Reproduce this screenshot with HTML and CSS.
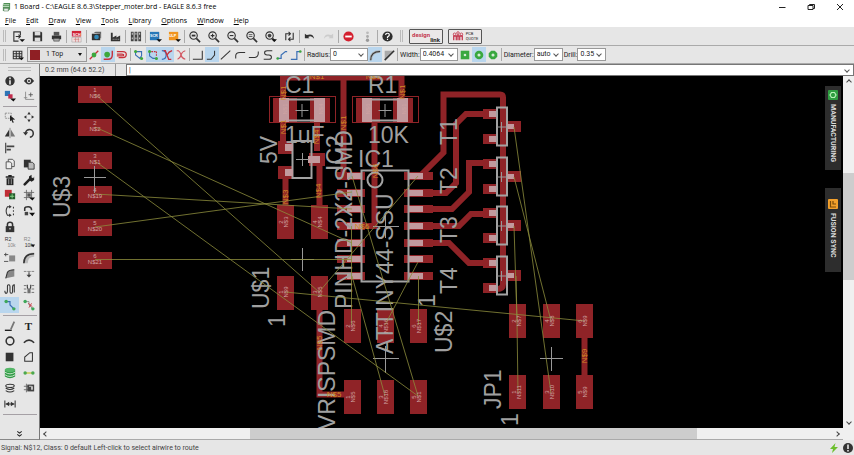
FILE: index.html
```html
<!DOCTYPE html>
<html lang="en">
<head>
<meta charset="utf-8">
<title>1 Board - EAGLE</title>
<link rel="stylesheet" href="styles.css">
</head>
<body>
<header class="titlebar">
  <svg class="app-icon" viewBox="0 0 10 11"><path d="M2 1h7v7l-2 2H1V3z" fill="#4f8f55"/><path d="M1 5h7M1 3h7" stroke="#c9e3c9" stroke-width="1"/><path d="M2 7h5v3H2z" fill="#e6efe6" stroke="#5c7f60" stroke-width=".6"/></svg>
  <h1>1 Board - C:\EAGLE 8.6.3\Stepper_moter.brd - EAGLE 8.6.3 free</h1>
  <div class="window-buttons">
    <button aria-label="Minimize"><svg viewBox="0 0 8 8"><path d="M1 4.5h6.500" /></svg></button>
    <button aria-label="Restore"><svg viewBox="0 0 8 8"><path d="M1 2.500h5v4H1zM2.500 2.500v-1H7.500v4H6"/></svg></button>
    <button aria-label="Close"><svg viewBox="0 0 8 8"><path d="M1 1l6 6M7 1L1 7"/></svg></button>
  </div>
</header>

<nav class="menubar">
  <a href="#"><u>F</u>ile</a><a href="#"><u>E</u>dit</a><a href="#"><u>D</u>raw</a><a href="#"><u>V</u>iew</a><a href="#"><u>T</u>ools</a><a href="#"><u>L</u>ibrary</a><a href="#"><u>O</u>ptions</a><a href="#"><u>W</u>indow</a><a href="#"><u>H</u>elp</a>
</nav>

<div class="toolbar main-tools">
  <span class="grip"></span>
  <button aria-label="Open"><svg viewBox="0 0 14 14"><path d="M9 6V2H2v10h5" class="ln"/><path d="M4 7h5M7 5l2 2-2 2" class="ln"/><path d="M8 10h6l-3 3z" fill="#111"/></svg></button>
  <button aria-label="Save"><svg viewBox="0 0 14 14"><path d="M2 2h9l1 1v9H2z" fill="#333"/><path d="M4 2h6v4H4zM4 8h6v4H4z" fill="#ddd"/><path d="M3 7h8" stroke="#333" stroke-width="1.500"/></svg></button>
  <button aria-label="Print"><svg viewBox="0 0 14 14"><path d="M4 2h6v4H4z" fill="#555"/><path d="M2 6h10v4H2z" fill="#333"/><path d="M4 9h6v3H4z" fill="#aaa" stroke="#333" stroke-width=".6"/></svg></button>
  <span class="sep"></span>
  <button aria-label="Schematic"><svg viewBox="0 0 14 14"><path d="M2 1h10v6H2z" fill="#d02236"/><text x="3" y="6" class="badge">SCH</text><path d="M2 8h10v5H2z" fill="#f2dede" stroke="#999" stroke-width=".5"/><path d="M4 10h6M6 8v5M9 8v5" stroke="#c77" stroke-width=".7"/></svg></button>
  <span class="sep"></span>
  <button aria-label="Board view"><svg viewBox="0 0 14 14"><path d="M2 4h9v7H2z" fill="#333"/><path d="M4 3l2-1h6v7h-1V4z" fill="#666"/><circle cx="7" cy="7.500" r="2.500" fill="#3289b8"/></svg></button>
  <button aria-label="Manufacture"><svg viewBox="0 0 14 14"><path d="M2 12V3h2v5l4-2v2l4-2v6z" fill="#333"/><path d="M4 10h7" stroke="#bbb" stroke-dasharray="1 1"/></svg></button>
  <span class="sep"></span>
  <button aria-label="Libraries"><svg viewBox="0 0 14 14"><path d="M2 2h3v10H2zM6 2h3v10H6zM10 2h3v10h-3z" fill="#444"/><path d="M3 4h1M7 4h1M11 4h1M3 9h1M7 9h1M11 9h1" stroke="#ddd" stroke-width="2"/></svg></button>
  <span class="sep"></span>
  <button aria-label="Run script"><svg viewBox="0 0 14 14"><path d="M1 2h10v9H1z" fill="#2878b8"/><text x="1" y="8" class="badge">SCR</text><path d="M8 10h6l-3 3z" fill="#111"/></svg></button>
  <button aria-label="Run ULP"><svg viewBox="0 0 14 14"><path d="M1 2h10v9H1z" fill="#f0931f"/><text x="1" y="8" class="badge">ULP</text><path d="M8 10h6l-3 3z" fill="#111"/></svg></button>
  <span class="sep"></span>
  <button aria-label="Zoom to fit"><svg viewBox="0 0 14 14"><circle cx="6" cy="6" r="4" class="ln"/><path d="M9 9l4 4" class="th"/><path d="M4 5h4v2H4z" fill="#333"/></svg></button>
  <button aria-label="Zoom in"><svg viewBox="0 0 14 14"><circle cx="6" cy="6" r="4" class="ln"/><path d="M9 9l4 4" class="th"/><path d="M4 6h4M6 4v4" class="ln"/></svg></button>
  <button aria-label="Zoom out"><svg viewBox="0 0 14 14"><circle cx="6" cy="6" r="4" class="ln"/><path d="M9 9l4 4" class="th"/><path d="M4 6h4" class="ln"/></svg></button>
  <button aria-label="Redraw"><svg viewBox="0 0 14 14"><circle cx="6" cy="6" r="4" class="ln"/><path d="M9 9l4 4" class="th"/><path d="M4 5h4M4 7h4" stroke="#333" stroke-width=".8"/></svg></button>
  <button aria-label="Zoom select"><svg viewBox="0 0 14 14"><circle cx="6" cy="6" r="4" class="ln"/><circle cx="6" cy="6" r="2" fill="#444"/><path d="M9 9l3 3" class="th"/><path d="M8 10h6l-3 3z" fill="#111"/></svg></button>
  <button aria-label="Refresh"><svg viewBox="0 0 14 14"><path d="M3 11V4h5M6 2l2 2-2 2M11 3v7H6M8 8l-2 2 2 2" class="ln"/></svg></button>
  <span class="sep"></span>
  <button aria-label="Undo"><svg viewBox="0 0 14 14"><path d="M2 4v5h5L5.500 7.500Q9 5 12 9.500 11 3 4 5.500z" fill="#333"/></svg></button>
  <button aria-label="Redo"><svg viewBox="0 0 14 14"><path d="M12 4v5H7l1.500-1.500Q5 5 2 9.500 3 3 10 5.500z" fill="#ccc"/></svg></button>
  <span class="sep"></span>
  <button aria-label="Stop"><svg viewBox="0 0 14 14"><circle cx="7" cy="7" r="5.500" fill="#d4202f"/><path d="M3.500 7h7" stroke="#fff" stroke-width="2"/></svg></button>
  <button aria-label="Go"><svg viewBox="0 0 14 14"><circle cx="7" cy="3" r="1.500" fill="#bbb"/><circle cx="7" cy="7" r="1.500" fill="#aaa"/><circle cx="7" cy="11" r="1.800" fill="#999"/></svg></button>
  <span class="sep"></span>
  <button aria-label="Help"><svg viewBox="0 0 14 14"><circle cx="7" cy="7" r="5.500" fill="#2f2f2f"/><path d="M5 5.500Q5 3.500 7 3.500T9 5.500Q9 6.500 7 7.500v1M7 9.500v1.200" fill="none" stroke="#fff" stroke-width="1.300"/></svg></button>
  <span class="grip"></span>
  <button class="brand" aria-label="design link"><span class="brand-a">design</span><span class="brand-b">link</span></button>
  <button class="brand quote" aria-label="PCB quote"><svg viewBox="0 0 14 12"><path d="M2 11V6h10v5M5 11V5M9 11V5M7 11V4" stroke="#c43a50" stroke-width="1.500" fill="none"/><circle cx="3" cy="4" r="1.500" fill="none" stroke="#c43a50"/><circle cx="7" cy="2.500" r="1.500" fill="none" stroke="#c43a50"/><circle cx="11" cy="4" r="1.500" fill="none" stroke="#c43a50"/></svg><span class="brand-c">PCB<br>QUOTE</span></button>
</div>

<div class="toolbar params">
  <span class="grip"></span>
  <button class="wide" aria-label="Grid"><svg viewBox="0 0 14 14"><path d="M1.500 2.500h10v9h-10zM1.500 5.500h10M1.500 8.500h10M5 2.500v9M8.500 2.500v9" class="ln"/><path d="M8 10h6l-3 3z" fill="#111"/></svg></button>
  <span class="combo layer"><i class="swatch"></i><select aria-label="Layer"><option>1 Top</option></select></span>
  <button aria-label="Ignore obstacles"><svg viewBox="0 0 14 14"><path d="M2 12L12 2" stroke="#c8303a" stroke-width="1.600"/><circle cx="7" cy="7" r="2.800" fill="#3da83d"/></svg></button>
  <button class="on" aria-label="Walkaround"><svg viewBox="0 0 14 14"><path d="M2 12h5q5 0 5-5V2" fill="none" stroke="#c8303a" stroke-width="1.600"/><circle cx="6" cy="6.500" r="3.300" fill="#3da83d"/></svg></button>
  <button aria-label="Push"><svg viewBox="0 0 14 14"><path d="M1 3h7q4 0 4 3.500T8 10H3M1 6h6q2 0 2 1T7 8H1" fill="none" stroke="#c8303a" stroke-width="1.500"/></svg></button>
  <span class="sep"></span>
  <button aria-label="Loop removal"><svg viewBox="0 0 14 14"><path d="M3 3h7v5l-2 3-5-4z" fill="none" stroke="#3b70b5" stroke-width="1.300"/><circle cx="3" cy="3" r="1.800" fill="#3da83d"/><circle cx="10" cy="11" r="1.800" fill="#3da83d"/></svg></button>
  <button class="on" aria-label="Loop keep"><svg viewBox="0 0 14 14"><path d="M3 3v5l4 3h3" fill="none" stroke="#3b70b5" stroke-width="1.300"/><path d="M5 3h6v6" fill="none" stroke="#c8303a" stroke-dasharray="2 1" stroke-width="1.300"/><circle cx="3" cy="3" r="1.800" fill="#3da83d"/><circle cx="11" cy="11" r="1.800" fill="#3da83d"/></svg></button>
  <button class="on" aria-label="Corner mode"><svg viewBox="0 0 14 14"><path d="M1 2q5 0 5 5t-5 5" class="blue"/><path d="M3 2h2l4 10h3M13 2q-4 1-6 5" fill="none" stroke="#c8303a" stroke-width="1.500"/></svg></button>
  <button aria-label="Corner free"><svg viewBox="0 0 14 14"><path d="M2 2h2q2 1 3 5t5 5M12 2q-4 1-5 5T3 12" fill="none" stroke="#d25560" stroke-width="1.300"/></svg></button>
  <span class="sep"></span>
  <button aria-label="Bend 90"><svg viewBox="0 0 14 14"><path d="M1 12h11V2" class="ln"/></svg></button>
  <button class="on" aria-label="Bend 45"><svg viewBox="0 0 14 14"><path d="M1 12h5l4-5V2" class="ln"/></svg></button>
  <button aria-label="Straight"><svg viewBox="0 0 14 14"><path d="M1 12L12 2" class="ln"/></svg></button>
  <button aria-label="Arc start"><svg viewBox="0 0 14 14"><path d="M2 11V8q0-4 5-4h6" class="ln"/></svg></button>
  <button aria-label="Arc end"><svg viewBox="0 0 14 14"><path d="M1 10h6q5 0 5-5V3" class="ln"/></svg></button>
  <button aria-label="S bend"><svg viewBox="0 0 14 14"><path d="M12 2H6Q3 2 3 4.500T6 7h2q3 0 3 2.500T8 12H2" class="ln"/></svg></button>
  <button aria-label="Bend A"><svg viewBox="0 0 14 14"><path d="M1 11h5V7l5-4h2" class="blue"/><circle cx="2" cy="11" r="1.500" fill="#3da83d"/></svg></button>
  <button aria-label="Bend B"><svg viewBox="0 0 14 14"><path d="M1 12h7V3h5" class="blue"/><circle cx="12" cy="3" r="1.500" fill="#3da83d"/></svg></button>
  <span class="sep"></span>
  <label for="radius">Radius:</label><span class="combo c-wide"><select id="radius"><option>0</option></select></span>
  <button class="on" aria-label="Round miter"><svg viewBox="0 0 14 14"><path d="M2 13Q2 3 13 3" fill="none" stroke="#aaa" stroke-width="3"/><path d="M2 13Q2 3 13 3" class="ln"/></svg></button>
  <button aria-label="Straight miter"><svg viewBox="0 0 14 14"><path d="M2 2h11L2 13z" fill="#aaa"/><path d="M2 13L13 2" class="th"/></svg></button>
  <span class="sep"></span>
  <label for="width">Width:</label><span class="combo c-wide"><select id="width"><option>0.4064</option></select></span>
  <button aria-label="Square via"><svg viewBox="0 0 14 14"><path d="M2 2h10v10H2z" fill="#3aa83f"/><circle cx="7" cy="7" r="1.500" fill="#d6edd6"/></svg></button>
  <button class="on" aria-label="Round via"><svg viewBox="0 0 14 14"><circle cx="7" cy="7" r="5" fill="#3aa83f"/><circle cx="7" cy="7" r="1.800" fill="#d6edd6"/></svg></button>
  <button aria-label="Octagon via"><svg viewBox="0 0 14 14"><path d="M5 2h4l3 3v4l-3 3H5L2 9V5z" fill="#3aa83f"/><circle cx="7" cy="7" r="1.800" fill="#d6edd6"/></svg></button>
  <span class="sep"></span>
  <label for="diameter">Diameter:</label><span class="combo"><select id="diameter"><option>auto</option></select></span>
  <label for="drill">Drill:</label><span class="combo"><select id="drill"><option>0.35</option></select></span>
</div>

<main class="workspace">
  <aside class="palette">
    <span class="palette-grip"></span>
    <div class="tools tools-view">
      <button aria-label="Info"><svg viewBox="0 0 14 14"><circle cx="7" cy="7" r="5.500" fill="#333"/><path d="M7 3v2M7 6v5" stroke="#eee" stroke-width="1.800"/></svg></button>
      <button aria-label="Show"><svg viewBox="0 0 14 14"><path d="M1 7q6-8 12 0-6 8-12 0z" fill="#333"/><circle cx="7" cy="7" r="2.500" fill="#ddd"/><circle cx="7" cy="7" r="1.300" fill="#333"/></svg></button>
      <button aria-label="Layers"><svg viewBox="0 0 14 14"><path d="M1 1h6v6H1z" fill="#2e75b6"/><path d="M5 5h5v5H5z" fill="#c22b4b"/><path d="M7 10h7l-3 3.500z" fill="#111"/></svg></button>
      <button aria-label="Mark"><svg viewBox="0 0 14 14"><path d="M3 2v9h10M1 9h4" fill="none" stroke="#888"/><path d="M9 3v5M6.500 5.500h5" stroke="#555"/></svg></button>
    </div>
    <hr>
    <div class="tools tools-edit">
      <button aria-label="Group"><svg viewBox="0 0 14 14"><path d="M1.500 2.500h7v6h-7z" fill="none" stroke="#888" stroke-dasharray="2 1"/><path d="M7 5l6 5-3 .3 1.500 3-1.500.5-1.300-3L7 12z" fill="#222"/></svg></button>
      <button aria-label="Move"><svg viewBox="0 0 14 14"><path d="M7 1l2 3H5zM7 13l2-3H5zM1 7l3-2v4zM13 7l-3-2v4z" fill="#333"/></svg></button>
      <button aria-label="Mirror"><svg viewBox="0 0 14 14"><path d="M6 3v8H1z" fill="#333"/><path d="M8 3v8h5z" fill="#777"/><path d="M7 1v12" stroke="#555" stroke-width=".7"/></svg></button>
      <button aria-label="Rotate"><svg viewBox="0 0 14 14"><path d="M3 8A4.500 4.500 0 1 1 8 12" class="th" fill="none"/><path d="M0 6h6L3 10z" fill="#333"/></svg></button>
      <button aria-label="Align"><svg viewBox="0 0 14 14"><path d="M2 1v12" class="ln"/><path d="M3 5h9M3 9h5" stroke="#444" stroke-width="2"/></svg></button><span></span>
      <button aria-label="Copy"><svg viewBox="0 0 14 14"><path d="M5 1.500h5l2 2V10H5z" fill="#eee" stroke="#444"/><path d="M2.500 4.500H7L9 6v6.500H2.500z" fill="#eee" stroke="#444"/></svg></button>
      <button aria-label="Paste"><svg viewBox="0 0 14 14"><path d="M1 2h8v9H1z" fill="#333"/><path d="M6 5h5l2 2v6H6z" fill="#bbb" stroke="#333"/></svg></button>
      <button aria-label="Delete"><svg viewBox="0 0 14 14"><path d="M2 3.500h10M5 2h4" stroke="#222" stroke-width="1.500"/><path d="M3 5h8v8H3z" fill="#222"/><path d="M5.500 6v6M8.500 6v6" stroke="#aaa"/></svg></button>
      <button aria-label="Change"><svg viewBox="0 0 14 14"><path d="M2 12l6-6" stroke="#222" stroke-width="3" stroke-linecap="round"/><path d="M7 7V3l3-2v3l2 1 1-2v4l-3 2z" fill="#222"/></svg></button>
      <button aria-label="Add part"><svg viewBox="0 0 14 14"><path d="M1 1h8v8H1z" fill="#c02d35"/><path d="M6 5h7v7H6z" fill="#235c2b"/><path d="M9.500 6v5M7 8.500h5" stroke="#8edc8e"/></svg></button>
      <button aria-label="Replace"><svg viewBox="0 0 14 14"><path d="M1 4h12M1 10h9M4 1v12M10 1v9" stroke="#666"/><path d="M5 5h4v4H5z" fill="#555"/><path d="M7 10h7l-3 3.500z" fill="#111"/></svg></button>
      <button aria-label="Pin swap"><svg viewBox="0 0 14 14"><path d="M7 2H4Q1 7 4 12h3" class="ln"/><path d="M6 0l3 2-3 2zM6 10l3 2-3 2z" fill="#333"/><path d="M11 2v11" class="ln" stroke-dasharray="2 2"/></svg></button>
      <button aria-label="Replace part"><svg viewBox="0 0 14 14"><path d="M2 7V4q0-2 4-2t4 4" class="th" fill="none"/><path d="M2 8h4v4H2z" fill="#444"/><path d="M7 9h7l-3 4z" fill="#111"/></svg></button>
      <button aria-label="Lock"><svg viewBox="0 0 14 14"><path d="M4 7V4q0-2.500 3-2.500T10 4v3" class="th" fill="none"/><path d="M2 6h10v7H2z" fill="#333"/><circle cx="7" cy="9" r="1" fill="#bbb"/></svg></button><span></span>
      <button aria-label="Name"><svg viewBox="0 0 14 14"><text x="1" y="6" class="glyph">R2</text><text x="4" y="13" class="glyph light">10k</text></svg></button>
      <button aria-label="Value"><svg viewBox="0 0 14 14"><text x="1" y="6" class="glyph light">R2</text><text x="2" y="13" class="glyph">10k</text><path d="M9 10h5l-2 3z" fill="#111"/></svg></button>
      <button aria-label="Smash"><svg viewBox="0 0 14 14"><path d="M6 4h7v7H6z" fill="#888"/><path d="M0 3h5M0 11h5M2 1v4" stroke="#444"/></svg></button>
      <button aria-label="Miter"><svg viewBox="0 0 14 14"><path d="M3 13Q3 3 13 3" fill="none" stroke="#bbb" stroke-width="5"/><path d="M1 13Q1 2 13 2" class="th" fill="none"/></svg></button>
      <button aria-label="Split"><svg viewBox="0 0 14 14"><path d="M4 5Q5 2 12 2v8L2 12z" fill="#888"/><path d="M2 12l2-7q2-3 8-3" class="ln"/></svg></button>
      <button aria-label="Optimize"><svg viewBox="0 0 14 14"><path d="M1 4h3M10 4h3M5 4h4" stroke="#777"/><path d="M4 8h6l-3 3z" fill="#444"/><path d="M7 5v4" class="ln"/></svg></button>
      <button aria-label="Meander"><svg viewBox="0 0 14 14"><path d="M1 9q0 3 1.500 3T4 9V4q0-2 1.500-2T7 4v6q0 2 1.500 2T10 10V5q0-3 2-3v9" class="ln"/></svg></button>
      <button aria-label="Differential"><svg viewBox="0 0 14 14"><path d="M1 3h3M1 7h3M1 11h3M10 3h3M10 7h3M10 11h3" stroke="#666"/><path d="M5 2v3l1 2v5M9 2v3L8 7v5" class="ln"/></svg></button>
      <button class="on" aria-label="Route"><svg viewBox="0 0 14 14"><path d="M2 3h5v4l5 5" class="blue"/><circle cx="2.500" cy="3" r="2" fill="#3da85a"/><circle cx="11.500" cy="11.500" r="2" fill="#3da85a"/></svg></button>
      <button aria-label="Ripup"><svg viewBox="0 0 14 14"><path d="M2 3h5v4l5 5" fill="none" stroke="#888"/><path d="M6 5l5 4M10 5l-3 5" stroke="#c8303a"/><circle cx="2.500" cy="3" r="2" fill="#3da85a"/><circle cx="11.500" cy="11.500" r="2" fill="#3da85a"/></svg></button>
    </div>
    <hr>
    <div class="tools tools-draw">
      <button aria-label="Line"><svg viewBox="0 0 14 14"><path d="M1 12h8" stroke="#111" stroke-width="1.500"/><path d="M8 11l4-9" stroke="#777" stroke-width="2"/></svg></button>
      <button class="letter" aria-label="Text">T</button>
      <button aria-label="Circle"><svg viewBox="0 0 14 14"><circle cx="7" cy="7" r="4.500" class="th" fill="none"/></svg></button>
      <button aria-label="Arc"><svg viewBox="0 0 14 14"><path d="M1 9q6-6 12 0" class="th" fill="none"/></svg></button>
      <button aria-label="Rectangle"><svg viewBox="0 0 14 14"><path d="M2 2h9v10H2z" fill="#333"/></svg></button>
      <button aria-label="Polygon"><svg viewBox="0 0 14 14"><path d="M2 12V7l6-5h3v10z" class="ln"/></svg></button>
      <button aria-label="Via"><svg viewBox="0 0 14 14"><path d="M1 3v8q6 4 12 0V3z" fill="#319a45"/><ellipse cx="7" cy="3.500" rx="6" ry="2.500" fill="#55b768"/><path d="M1 6q6 4 12 0M1 9q6 4 12 0" fill="none" stroke="#d9efdc"/></svg></button>
      <button aria-label="Signal"><svg viewBox="0 0 14 14"><path d="M2 7h10" stroke="#c5c939" stroke-width="1.500"/><circle cx="2.500" cy="7" r="2" fill="#4ba84f"/><circle cx="11.500" cy="7" r="2" fill="#4ba84f"/></svg></button>
      <button aria-label="Hole"><svg viewBox="0 0 14 14"><ellipse cx="7" cy="4.500" rx="5" ry="2" class="ln"/><path d="M2 7q5 3.500 10 0M2 10q5 3.500 10 0" class="ln"/></svg></button>
      <button aria-label="Attribute"><svg viewBox="0 0 14 14"><path d="M1 5h5M1 9h5M4 2v10" stroke="#666"/><path d="M5 3h8v8H5z" fill="#444"/><path d="M7 5h3v4M11 5v4" stroke="#ddd" fill="none"/></svg></button>
      <button aria-label="Dimension"><svg viewBox="0 0 14 14"><path d="M1 3v8M13 3v8M2 7h10" class="ln"/><path d="M2 7l4-2.500v5zM12 7L8 4.500v5z" fill="#333"/></svg></button>
    </div>
    <hr>
    <button class="more" aria-label="More tools"><svg viewBox="0 0 8 8"><path d="M1.500 1L4 3l2.500-2M1.500 4.500l2.500 2 2.500-2" fill="none" stroke="#222" stroke-width="1.200"/></svg></button>
  </aside>

  <section class="editor">
    <div class="command-row">
      <output class="coords">0.2 mm (64.6 52.2)</output>
      <span class="combo command"><input type="text" aria-label="Command line" value="|"></span>
    </div>
    <div class="view">
      <div class="canvas">
        <svg class="board" viewBox="40 76 803 352" preserveAspectRatio="xMinYMin slice">
          <defs>
            <g id="chip">
              <rect x="269.500" y="96.500" width="66" height="26" class="outline"/>
              <path d="M273 98h24v25h-24zM310 98h20v25h-20z" class="cu"/>
              <path d="M279 98h10v24h-10zM314 98h11v24h-11z" class="pin"/>
              <path d="M289 99.500h25M289 120.500h25" class="silk"/>
              <path d="M302 104v13M295.500 110.500h13" class="origin"/>
            </g>
            <g id="sot">
              <path d="M483 109h14v10h-14zM483 134h14v10h-14zM508 121h13v11h-13z" class="cu"/>
              <rect x="497" y="107.500" width="10" height="38" class="silk"/>
              <path d="M489 111h7v6h-7zM489 136h7v6h-7zM507 124h7v5h-7z" class="pin"/>
              <path d="M501.500 122v10M497 127h10" class="origin"/>
            </g>
            <g id="lpin"><path d="M337 172h28v8h-28z" class="cu"/><path d="M347 173h14v6h-14z" class="pin"/></g>
            <g id="rpin"><path d="M404 172h29v8h-29z" class="cu"/><path d="M408 173h15v6h-15z" class="pin"/></g>
            <path id="hpad" d="M78 86h34v17H78z" class="cu"/>
            <path id="vpad" d="M0 0h17v34H0z" class="cu"/>
          </defs>
          <rect x="40" y="76" width="803" height="352" fill="#000"/>

          <g class="trace">
            <path d="M283 76v68M317 120v31M283 77.500h121M401.500 76v24M343.500 77v99h8M374.500 120v106h-14"/>
            <path d="M285.500 172v34M319.500 160v46M319.500 300v94.500h26M584.500 336v42"/>
            <path d="M418 178l25.500-25.500V94.500H500q3 0 3 3V284q0 5-6 5"/>
            <path d="M428 193h18l10-10v-59l10-10h20"/>
            <path d="M428 209h24l17-17v-29h17"/>
            <path d="M428 226h31l12-12h15"/>
            <path d="M428 243h21l20 20h17"/>
          </g>
          <path d="M278 141h15v13h-15zM278 166h15v13h-15zM309 153h16v13h-16z" class="cu"/>
          <use href="#chip"/><use href="#chip" x="83"/>
          <use href="#lpin"/><use href="#lpin" y="17"/><use href="#lpin" y="33"/><use href="#lpin" y="50"/><use href="#lpin" y="67"/><use href="#lpin" y="83"/><use href="#lpin" y="100"/>
          <use href="#rpin"/><use href="#rpin" y="17"/><use href="#rpin" y="33"/><use href="#rpin" y="50"/><use href="#rpin" y="67"/><use href="#rpin" y="83"/><use href="#rpin" y="100"/>
          <use href="#sot"/><use href="#sot" y="50"/><use href="#sot" y="99"/><use href="#sot" y="149"/>
          <use href="#hpad"/><use href="#hpad" y="33"/><use href="#hpad" y="66"/><use href="#hpad" y="100"/><use href="#hpad" y="133"/><use href="#hpad" y="166"/>
          <use href="#vpad" x="277" y="205"/><use href="#vpad" x="311" y="205"/><use href="#vpad" x="277" y="276"/><use href="#vpad" x="311" y="276"/>
          <use href="#vpad" x="344" y="309"/><use href="#vpad" x="377" y="309"/><use href="#vpad" x="410" y="309"/>
          <use href="#vpad" x="344" y="380"/><use href="#vpad" x="377" y="380"/><use href="#vpad" x="410" y="380"/>
          <use href="#vpad" x="509" y="304"/><use href="#vpad" x="543" y="304"/><use href="#vpad" x="576" y="304"/>
          <use href="#vpad" x="509" y="375"/><use href="#vpad" x="543" y="375"/><use href="#vpad" x="576" y="375"/>

          <rect x="292.500" y="141" width="19" height="37" class="silk"/>
          <path d="M285 144h8v7h-8zM285 169h8v7h-8zM308 156h12v7h-12z" class="pin"/>
          <path d="M302.500 153v13M296 159.500h13" class="origin"/>
          <rect x="361.500" y="170.500" width="47" height="111" class="silk"/>
          <circle cx="375" cy="180" r="7.500" class="silk"/>
          <path d="M94.500 166v27M84 177.500h22M302.500 248v23M291 259.500h23M385.500 215v23M373 226.500h26M385.500 346v27M373 358.500h26M551.500 347v24M540 358.500h23" class="origin"/>

          <g class="name">
            <text x="285" y="93">C1</text><text x="368" y="93">R1</text>
            <text x="285" y="143">1uF</text><text x="368" y="143">10K</text><text x="358" y="167">IC1</text>
            <text transform="translate(70 218) rotate(-90)">U$3</text>
            <text transform="translate(277 164) rotate(-90)">5V</text>
            <text transform="translate(343 171) rotate(-90)">IC2</text>
            <text transform="translate(352 309) rotate(-90)">PINHD-2X2-SMD</text>
            <text transform="translate(393 354) rotate(-90)">ATTINY44-SSU</text>
            <text transform="translate(335 430) rotate(-90)">VRISPSMD</text>
            <text transform="translate(269 309) rotate(-90)">U$1</text>
            <text transform="translate(285 327) rotate(-90)">1</text>
            <text transform="translate(452 353) rotate(-90)">U$2</text>
            <text transform="translate(435 307) rotate(-90)">1</text>
            <text transform="translate(457 145) rotate(-90)">T1</text>
            <text transform="translate(457 194) rotate(-90)">T2</text>
            <text transform="translate(457 243) rotate(-90)">T3</text>
            <text transform="translate(457 294) rotate(-90)">T4</text>
            <text transform="translate(501 409) rotate(-90)">JP1</text>
            <text transform="translate(518 426) rotate(-90)">1</text>
          </g>

          <path class="air" d="M95 94L319 292M95 127L352 243M95 161L418 396M95 194L352 209M95 227L352 192M95 259.500H352M285 292L585 321M319 292L418 176M351.500 226V325M352 176L418 396M352 276L385 396M418 262L385 325M418.500 276V325M514 127L551 393M514 177L551 321M514 226L517 321 518 393M516 276L517 321"/>

          <g class="net">
            <text x="95" y="92">1</text><text x="95" y="98">N$6</text><text x="95" y="125">2</text><text x="95" y="131">N$2</text>
            <text x="95" y="158">3</text><text x="95" y="164">N$1</text><text x="95" y="192">4</text><text x="95" y="198">N$19</text>
            <text x="95" y="225">5</text><text x="95" y="231">N$20</text><text x="95" y="258">6</text><text x="95" y="264">N$21</text>
            <g transform="translate(288 222) rotate(-90)"><text y="-5">2</text><text>N$3</text></g>
            <g transform="translate(322 222) rotate(-90)"><text y="-5">4</text><text>N$4</text></g>
            <g transform="translate(288 292) rotate(-90)"><text y="-5">1</text><text>N$9</text></g>
            <g transform="translate(322 292) rotate(-90)"><text y="-5">3</text><text>N$5</text></g>
            <g transform="translate(355 326) rotate(-90)"><text y="-5">2</text><text>N$6</text></g>
            <g transform="translate(388 326) rotate(-90)"><text y="-5">4</text><text>N$16</text></g>
            <g transform="translate(421 326) rotate(-90)"><text y="-5">6</text><text>N$17</text></g>
            <g transform="translate(355 397) rotate(-90)"><text y="-5">1</text><text>N$5</text></g>
            <g transform="translate(388 397) rotate(-90)"><text y="-5">3</text><text>N$18</text></g>
            <g transform="translate(421 397) rotate(-90)"><text y="-5">5</text><text>N$1</text></g>
            <g transform="translate(521 321) rotate(-90)"><text y="-5">2</text><text>N$7</text></g>
            <g transform="translate(554 321) rotate(-90)"><text y="-5">4</text><text>N$8</text></g>
            <g transform="translate(587 321) rotate(-90)"><text y="-5">6</text><text>N$9</text></g>
            <g transform="translate(521 392) rotate(-90)"><text y="-5">1</text><text>N$11</text></g>
            <g transform="translate(554 392) rotate(-90)"><text y="-5">3</text><text>N$10</text></g>
            <g transform="translate(587 392) rotate(-90)"><text y="-5">5</text><text>N$9</text></g>
            <text transform="translate(287 109) rotate(-90)">N$1</text><text transform="translate(323 109) rotate(-90)">N$4</text>
            <text transform="translate(370 109) rotate(-90)">N$6</text><text transform="translate(406 109) rotate(-90)">N$1</text>
          </g>
          <g class="wire-net">
            <text transform="translate(286 93) rotate(-90)">N$1</text><text transform="translate(286 127) rotate(-90)">N$1</text>
            <text transform="translate(319 137) rotate(-90)">N$4</text><text transform="translate(346 123) rotate(-90)">N$1</text>
            <text transform="translate(405 92) rotate(-90)">N$1</text><text transform="translate(288 197) rotate(-90)">N$3</text>
            <text transform="translate(321 191) rotate(-90)">N$4</text><text transform="translate(378 171) rotate(-90)">N$6</text>
            <text transform="translate(322 343) rotate(-90)">N$5</text><text transform="translate(587 356) rotate(-90)">N$9</text>
            <text x="317" y="79">N$1</text><text x="373" y="79">N$1</text><text x="362" y="229">N$6</text><text x="334" y="397">N$5</text>
          </g>
        </svg>
        <div class="side-tabs">
          <button><svg viewBox="0 0 10 10"><rect width="10" height="10" rx="1" fill="#2f9e41"/><path d="M3.500 2.500h3L8 5 6.500 7.500h-3L2 5z" fill="none" stroke="#b9f0b9" stroke-width="1.200"/></svg>MANUFACTURING</button>
          <button class="sync"><svg viewBox="0 0 10 10"><rect width="10" height="10" rx="1" fill="#f2a02c"/><path d="M2.500 2v6H8M5 2v3h3" fill="none" stroke="#7a4a08" stroke-width="1.200"/></svg>FUSION SYNC</button>
        </div>
      </div>
      <div class="scroll vertical"><i class="arrow up"></i><span class="track"><i class="thumb"></i></span><i class="arrow down"></i></div>
      <div class="scroll horizontal"><i class="arrow left"></i><span class="track"><i class="thumb"></i></span><i class="arrow right"></i></div>
    </div>
  </section>
</main>

<footer class="status">
  <span>Signal: N$12, Class: 0 default Left-click to select airwire to route</span>
  <svg viewBox="0 0 10 10"><path d="M6.500 0L1 6h3L3 10l6-6H5.500z" fill="#6cbf2c"/></svg>
  <svg viewBox="0 0 10 10"><circle cx="5" cy="5" r="5" fill="#333"/><path d="M5 1.500v4.500M5 7v1.500" stroke="#fff" stroke-width="1.400"/></svg>
</footer>
</body>
</html>
```
FILE: styles.css
```css
*, *::after { box-sizing: border-box; }

body {
  margin: 0;
  height: 100vh;
  display: flex;
  flex-direction: column;
  overflow: hidden;
  background: #e6e6e6;
  color: #222;
  font: 7px/10px Roboto, "Open Sans", sans-serif;
}

button, select, input { font: inherit; color: inherit; margin: 0; }
button { display: flex; align-items: center; justify-content: center; padding: 0; border: 0; background: none; }
svg { display: block; }

.ln { fill: none; stroke: #333; stroke-width: 1.2; }
.th { stroke: #333; stroke-width: 1.8; }
.blue { fill: none; stroke: #3b70b5; stroke-width: 1.4; }
.badge { font: bold 4px "Liberation Sans", sans-serif; fill: #fff; }
.glyph { font: 6px "Liberation Sans", sans-serif; fill: #333; }
.light { fill: #888; }

/* Title and menu */
.titlebar { display: flex; align-items: center; height: 14px; padding-left: 2px; background: #fff; }
.app-icon { width: 9px; height: 10px; margin-right: 3px; }
.titlebar h1 { flex: 1; margin: 0; font: 400 7px/14px "Open Sans", sans-serif; color: #000; }
.window-buttons { display: flex; }
.window-buttons button { width: 29px; }
.window-buttons svg { width: 8px; height: 8px; fill: none; stroke: #222; stroke-width: 1; }

.menubar { display: flex; gap: 10px; height: 13px; padding-left: 5px; background: #fff; font: 7px/14px "Open Sans", sans-serif; }
.menubar a { color: #000; text-decoration: none; }

/* Toolbars */
.toolbar { display: flex; align-items: center; flex: none; border-bottom: 1px solid #aaa; }
.main-tools { height: 19px; }
.params { height: 18px; }
.toolbar button { flex: none; height: 15px; }
.main-tools button { width: 19px; }
.main-tools svg { width: 13px; height: 13px; }
.params button { width: 14px; }
.params button svg { width: 12px; height: 12px; }
.params .wide { width: 18px; }
.grip { flex: none; width: 3px; height: 12px; margin: 0 3px; border: solid #bbb; border-width: 0 1px; }
.sep { flex: none; width: 1px; height: 13px; background: #aaa; }
.params .sep { margin: 0 1px; }
.on { background: #b9d6ee; }

.main-tools .brand { width: 34px; height: 15px; margin: 0 5px 0 3px; border: 1px solid #555; border-radius: 1px; background: #ebe8e8; }
.main-tools .brand + .brand { margin-left: 0; gap: 2px; }
.brand-a { color: #c43a50; line-height: 9px; align-self: flex-start; font-size: 6px; font-weight: 700; }
.brand-b { font-size: 6px; font-weight: 700; line-height: 7px; align-self: flex-end; }
.brand-c { font-size: 4px; line-height: 5px; text-align: left; }
.main-tools .brand svg { width: 12px; height: 12px; }

.combo { position: relative; display: flex; align-items: center; width: 29px; height: 13px; background: #fff; border: 1px solid #999; }
.combo::after {
  content: "";
  position: absolute;
  right: 4px;
  top: 3px;
  width: 4px;
  height: 4px;
  border: solid #555;
  border-width: 0 1px 1px 0;
  transform: rotate(45deg);
  pointer-events: none;
}
.combo select, .combo input { appearance: none; flex: 1; width: 100%; height: 11px; padding: 0 2px; border: 0; background: none; outline: 0; line-height: 11px; }
.c-wide { width: 38px; }
.layer { width: 60px; height: 15px; background: #e2e2e2; }
.layer::after { width: 4px; height: 3px; top: 5px; border: solid transparent; border-width: 3px 2px 0; border-top-color: #111; transform: none; }
.swatch { flex: none; width: 10px; height: 10px; margin: 0 4px 0 2px; background: #8f1f24; }
.params label { padding-left: 1px; }

/* Workspace */
.workspace { flex: 1; display: flex; min-height: 0; }
.palette { flex: none; display: flex; flex-direction: column; width: 40px; border-right: 1px solid #777; border-bottom: 1px solid #888; }
.palette-grip { height: 4px; margin: 3px 8px 2px; border: solid #bbb; border-width: 1px 0; }
.palette hr { width: 34px; margin: 2px auto; border: 0; border-top: 1px solid #a5a0a5; }
.tools { display: grid; grid-template-columns: 19px 19px; grid-auto-rows: 1fr; min-height: 0; }
.tools-view { flex: 2 1 0; }
.tools-edit { flex: 13 1 0; }
.tools-draw { flex: 6 1 0; }
.tools button { min-height: 0; }
.tools svg { width: 12px; height: 12px; }
.tools .letter { font: bold 11px/12px "Liberation Serif", serif; }
.more { height: 22px; align-items: flex-end; }
.more svg { width: 7px; height: 8px; margin-bottom: 1px; }

.editor { flex: 1; display: flex; flex-direction: column; min-width: 0; }
.command-row { flex: none; display: flex; height: 12px; }
.coords { width: 76px; padding-left: 5px; line-height: 13px; border-right: 1px solid #999; color: #444; }
.command { flex: 1; height: 12px; margin-left: 10px; border-color: #777; }

.view { flex: 1; display: grid; grid-template: 1fr 12px / 1fr 11px; min-height: 0; background: #f0f0f0; }
.canvas { position: relative; overflow: hidden; background: #000; min-height: 0; }
.board { width: 100%; height: 100%; }

.cu { fill: #8f2327; }
.pin { fill: #c29a9e; }
.outline { fill: none; stroke: #8f2327; stroke-width: 1; }
.trace { fill: none; stroke: #8f2327; stroke-width: 6; }
.silk { fill: none; stroke: #a3a3a3; stroke-width: 2; }
.origin { fill: none; stroke: #999; stroke-width: 1; }
.air { fill: none; stroke: #8c8c3c; stroke-width: 1; stroke-opacity: .8; }
.name { font: 23px "Liberation Sans", sans-serif; fill: #a0a0a0; }
.net { font: 6px "Liberation Sans", sans-serif; fill: #cfa3a3; text-anchor: middle; }
.wire-net { font: 8px "Liberation Sans", sans-serif; fill: #d08a24; text-anchor: middle; }

.side-tabs { position: absolute; top: 10px; right: 2px; display: flex; flex-direction: column; gap: 18px; }
.side-tabs button { width: 16px; height: 84px; writing-mode: vertical-rl; justify-content: flex-start; gap: 4px; padding-top: 4px; background: #2d2d2d; color: #ddd; font-size: 7px; font-weight: 700; }
.side-tabs .sync { padding-top: 11px; }
.side-tabs svg { width: 10px; height: 10px; }

.scroll { display: flex; align-items: center; }
.vertical { flex-direction: column; }
.horizontal { border-bottom: 1px solid #aaa; }
.track { flex: 1; align-self: stretch; display: flex; }
.vertical .track { flex-direction: column; padding-top: 85px; }
.horizontal .track { padding-left: 198px; }
.thumb { background: #cdcdcd; }
.vertical .thumb { height: 107px; }
.horizontal .thumb { width: 77%; }
.arrow { width: 4px; height: 4px; margin: 4px; border: solid #444; border-width: 1px 0 0 1px; }
.up { transform: rotate(45deg); }
.down { transform: rotate(225deg); }
.left { transform: rotate(-45deg); }
.right { transform: rotate(135deg); }

.status { flex: none; display: flex; align-items: center; gap: 4px; height: 15px; padding: 0 1px; color: #444; }
.status span { flex: 1; }
.status svg { width: 10px; height: 10px; }
```
